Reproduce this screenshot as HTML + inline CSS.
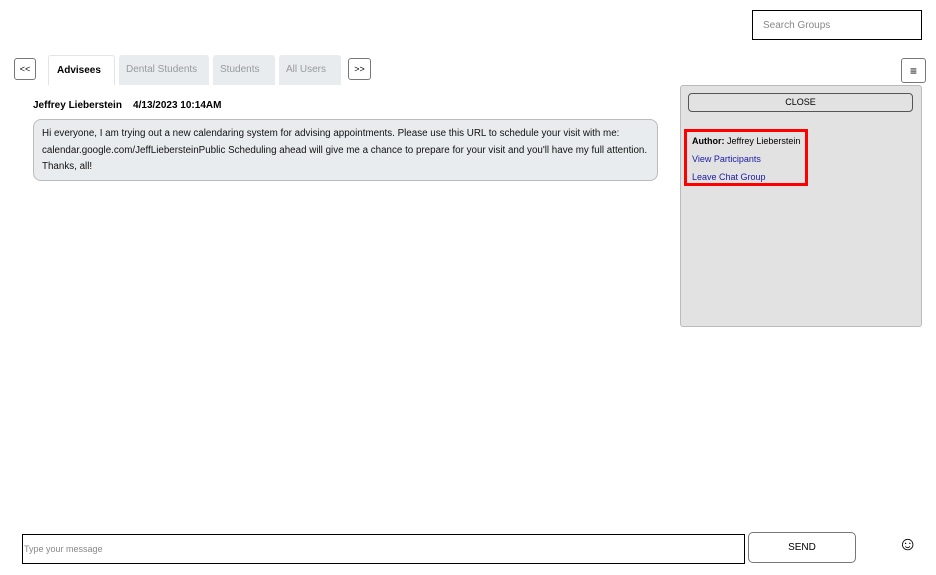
<!DOCTYPE html>
<html><head><meta charset="utf-8"><style>
*{box-sizing:border-box;margin:0;padding:0}
body{width:936px;height:575px;background:#fff;font-family:"Liberation Sans",Arial,sans-serif;position:relative;overflow:hidden;color:#000}
.a{position:absolute}
.btn{border:1px solid #777;border-radius:3px;background:#fff;font-size:9px;display:flex;align-items:center;justify-content:center}
.tab{top:55px;height:30px;background:#e9ecef;color:#999;font-size:10px;padding:9px 0 0 7px;border-radius:3px 3px 0 0}
</style></head><body>
<div class="a" style="left:752px;top:10px;width:170px;height:30px;border:1px solid #000;font-size:10px;color:#888;padding:9px 0 0 10px">Search Groups</div>
<div class="a btn" style="left:14px;top:58px;width:22px;height:22px">&lt;&lt;</div>
<div class="a tab" style="left:48px;width:67px;background:#fff;border:1px solid #e4e4e4;border-bottom:none;color:#000;font-weight:bold;padding:9px 0 0 8px">Advisees</div>
<div class="a tab" style="left:119px;width:90px">Dental Students</div>
<div class="a tab" style="left:213px;width:62px">Students</div>
<div class="a tab" style="left:279px;width:62px">All Users</div>
<div class="a btn" style="left:348px;top:58px;width:23px;height:22px">&gt;&gt;</div>
<div class="a btn" style="left:901px;top:58px;width:25px;height:25px;font-size:12px">≡</div>
<div class="a" style="left:33px;top:100px;font-size:10px;font-weight:bold;white-space:pre">Jeffrey Lieberstein    4/13/2023 10:14AM</div>
<div class="a" style="left:33px;top:119px;width:625px;height:62px;background:#e9ecef;border:1px solid #bbb;border-radius:8px;font-size:9.8px;line-height:16.5px;padding:6px 8px;color:#111;white-space:nowrap">Hi everyone, I am trying out a new calendaring system for advising appointments. Please use this URL to schedule your visit with me:<br>calendar.google.com/JeffLiebersteinPublic Scheduling ahead will give me a chance to prepare for your visit and you'll have my full attention.<br>Thanks, all!</div>
<div class="a" style="left:680px;top:85px;width:242px;height:242px;background:#e2e2e2;border:1px solid #bbb;border-radius:3px"></div>
<div class="a" style="left:688px;top:93px;width:225px;height:19px;border:1px solid #555;border-radius:4px;background:#e2e2e2;font-size:9px;text-align:center;line-height:17px">CLOSE</div>
<div class="a" style="left:684px;top:129px;width:124px;height:57px;border:3px solid #f00;font-size:9px;padding:0 0 0 5px;line-height:18px">
<div><b>Author:</b> Jeffrey Lieberstein</div><div style="color:#1a1aa6">View Participants</div><div style="color:#1a1aa6">Leave Chat Group</div></div>
<div class="a" style="left:22px;top:534px;width:723px;height:30px;border:1px solid #000;font-size:9px;color:#888;padding:9px 0 0 1px">Type your message</div>
<div class="a btn" style="left:748px;top:532px;width:108px;height:31px;border-radius:5px;font-size:10px">SEND</div>
<div class="a" style="left:898px;top:534px;font-size:19px;line-height:22px">☺</div>
</body></html>
